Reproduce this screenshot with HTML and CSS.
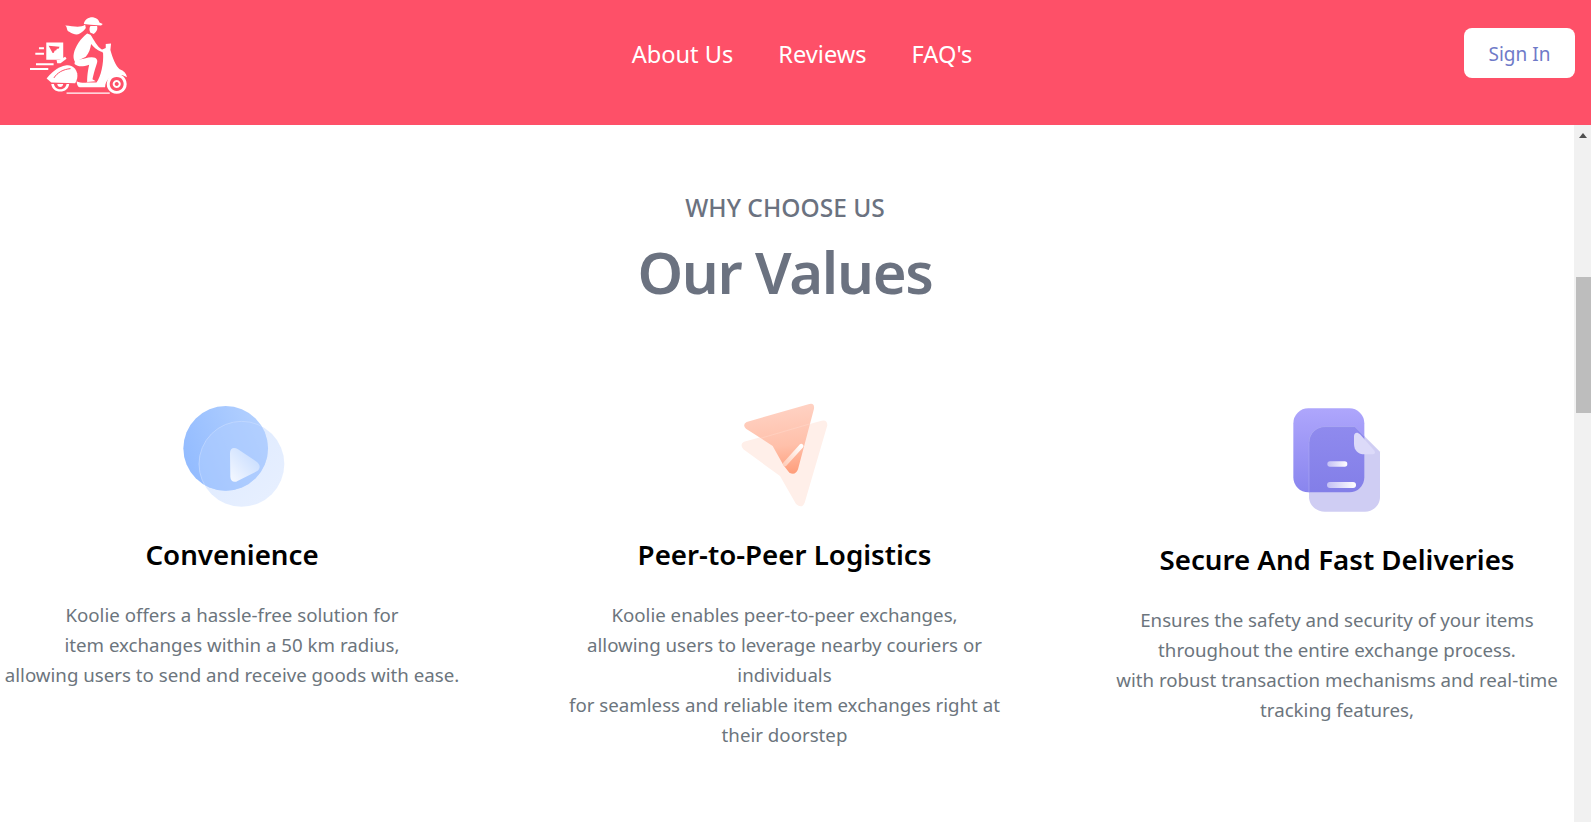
FILE: index.html
```html
<!DOCTYPE html>
<html lang="en">
<head>
<meta charset="utf-8">
<title>Koolie</title>
<link rel="stylesheet" href="styles.css">
</head>
<body>
<header class="topbar">
  <a class="logo" href="#" aria-label="Koolie">
    <svg class="logo-svg" viewBox="90 48 295 240" fill="#fff">
      <path d="M252 72C254 58 268 50 282 52C292 54 297 60 299 67L309 72L304 76L272 74Z"/>
      <path d="M272 78L292 78C294 86 292 92 288 96L282 102L272 98C268 92 268 84 272 78Z"/>
      <path d="M256 74C240 84 220 78 196 76C204 82 198 90 208 95C222 104 232 106 240 100C248 96 254 90 258 84Z"/>
      <path d="M262 100L272 104C282 118 292 140 308 150L306 156C290 150 280 140 274 132C272 145 268 160 258 170L226 186C216 172 222 150 236 128C244 116 252 108 262 100Z"/>
      <path d="M226 178C240 182 260 172 276 172C292 172 296 182 290 194C284 212 280 228 278 238L288 244L262 246C262 222 266 205 268 194C250 200 236 202 224 192Z"/>
      <path d="M318 132L334 130L332 150C338 172 348 198 360 208C372 212 380 220 382 232C366 222 344 222 332 232C322 240 316 250 316 262L240 262C232 260 232 252 230 244C240 248 252 250 262 248L290 248C304 230 312 190 310 160L304 150L318 144Z"/>
      <path fill-rule="evenodd" d="M139 127h51v52h-51zM146 137l33 3-3 6h-5l-2 5-5 1-2 6-4 1z"/>
      <path d="M170 180L178 180L196 170L200 176L182 190L172 190Z"/>
      <path d="M140 236C150 222 172 200 200 196C218 194 228 206 232 220C234 230 232 240 226 250L154 248Z"/>
      <path class="logo-cut" d="M162 234C172 218 190 208 212 206"/>
      <path fill-rule="evenodd" d="M154 252C156 266 166 275 181 275C196 275 206 266 208 252H200C198 262 190 268 181 268C172 268 164 262 162 252ZM172 252H190C189 258 186 261 181 261C176 261 173 258 172 252Z"/>
      <path fill-rule="evenodd" d="M351 222a30 30 0 1 0 .01 0zM351 231a21 21 0 1 1-.01 0zM351 240a12 12 0 1 0 .01 0zM351 246a6 6 0 1 1-.01 0z"/>
      <path d="M117 142h15v6h-15zM106 158h26v6h-26zM108 190h53v6h-53zM90 204h55v6H90z"/>
      <path d="M200 278h130v4H200z"/>
    </svg>
  </a>
  <nav class="nav">
    <a href="#">About Us</a>
    <a href="#">Reviews</a>
    <a href="#">FAQ's</a>
  </nav>
  <a class="signin" href="#">Sign In</a>
</header>
<div class="viewport">
  <main class="content">
    <section class="intro">
      <p class="eyebrow">WHY CHOOSE US</p>
      <h1 class="title">Our Values</h1>
    </section>
    <section class="values">
      <article class="value">
        <div class="icon-box">
          <svg class="icon icon-wide" viewBox="6 0 420 390">
            <defs>
              <linearGradient id="b1" x1="0" y1="0.7" x2="1" y2="0.3"><stop offset="0" stop-color="#92bbff"/><stop offset="1" stop-color="#b4d1ff"/></linearGradient>
              <linearGradient id="b2" x1="0" y1="0" x2="1" y2="1"><stop offset="0" stop-color="#dce9ff"/><stop offset="1" stop-color="#e8f0ff"/></linearGradient>
              <linearGradient id="b3" x1="0" y1="1" x2="1" y2="0"><stop offset="0" stop-color="#f6f9ff"/><stop offset="1" stop-color="#c0d8ff"/></linearGradient>
              <clipPath id="bc"><circle cx="197" cy="175" r="127"/></clipPath>
            </defs>
            <circle cx="245" cy="222" r="128" fill="url(#b2)"/>
            <circle cx="197" cy="175" r="127" fill="url(#b1)"/>
            <circle cx="245" cy="222" r="128" fill="#b0ceff" fill-opacity=".55" stroke="#c8ddff" stroke-width="2" clip-path="url(#bc)"/>
            <path d="M210 190C210 174 222 170 234 178L290 215C302 224 302 236 290 244L234 272C222 280 212 274 211 260Z" fill="url(#b3)"/>
          </svg>
        </div>
        <h2 class="value-title">Convenience</h2>
        <p class="value-text">Koolie offers a hassle-free solution for<br>item exchanges within a 50 km radius,<br>allowing users to send and receive goods with ease.</p>
      </article>
      <article class="value">
        <div class="icon-box">
          <svg class="icon" viewBox="0 0 390 390">
            <defs>
              <linearGradient id="o1" x1="0.5" y1="0" x2="0.6" y2="1"><stop offset="0" stop-color="#ffd3c5"/><stop offset=".6" stop-color="#ffc0aa"/><stop offset="1" stop-color="#ff9e7b"/></linearGradient>
              <linearGradient id="o2" x1="1" y1="0" x2="0" y2="1"><stop offset="0" stop-color="#fff"/><stop offset="1" stop-color="#ffd0bd"/></linearGradient>
            </defs>
            <path d="M72 155L305 92Q322 88 322 106L254 338Q246 358 228 342L180 258L70 178Q58 162 72 155Z" fill="#ffefe9"/>
            <path d="M80 96L268 42Q284 38 282 56L234 238Q226 258 208 248L190 225L158 168L78 116Q66 104 80 96Z" fill="url(#o1)"/>
            <path d="M118 146L282 98" stroke="#fff" stroke-opacity=".25" stroke-width="2"/>
            <path d="M195 222L244 168" stroke="url(#o2)" stroke-width="13" stroke-linecap="round"/>
          </svg>
        </div>
        <h2 class="value-title">Peer-to-Peer Logistics</h2>
        <p class="value-text">Koolie enables peer-to-peer exchanges,<br>allowing users to leverage nearby couriers or individuals<br>for seamless and reliable item exchanges right at their doorstep</p>
      </article>
      <article class="value value-low">
        <div class="icon-box">
          <svg class="icon" viewBox="6 0 390 390">
            <defs>
              <linearGradient id="p1" x1="0" y1="0" x2="0" y2="1"><stop offset="0" stop-color="#aea6fc"/><stop offset="1" stop-color="#8985ee"/></linearGradient>
              <linearGradient id="p2" x1="0" y1="0" x2="1" y2="0"><stop offset="0" stop-color="#c3c0f5"/><stop offset="1" stop-color="#fff"/></linearGradient>
              <linearGradient id="p3" x1="0" y1="0" x2="0" y2="1"><stop offset="0" stop-color="#8f8aee"/><stop offset="1" stop-color="#7f7be6"/></linearGradient>
              <clipPath id="pc"><rect x="70" y="40" width="213" height="252" rx="45"/></clipPath>
            </defs>
            <rect x="70" y="40" width="213" height="252" rx="45" fill="url(#p1)"/>
            <path d="M165 95H255L330 170V305C330 330 310 350 285 350H165C138 350 117 330 117 305V143C117 116 138 95 165 95Z" fill="#cfcdf3"/>
            <path d="M165 95H255L330 170V305C330 330 310 350 285 350H165C138 350 117 330 117 305V143C117 116 138 95 165 95Z" fill="url(#p3)" stroke="#a9a6f3" stroke-width="2" clip-path="url(#pc)"/>
            <path d="M252 124C252 112 262 110 270 118L312 166C318 174 314 178 306 178H284C264 178 252 166 252 146Z" fill="#dcdaf9"/>
            <rect x="172" y="199" width="60" height="16" rx="8" fill="url(#p2)"/>
            <rect x="171" y="261" width="87" height="18" rx="9" fill="url(#p2)"/>
          </svg>
        </div>
        <h2 class="value-title">Secure And Fast Deliveries</h2>
        <p class="value-text">Ensures the safety and security of your items<br>throughout the entire exchange process.<br>with robust transaction mechanisms and real-time tracking features,</p>
      </article>
    </section>
  </main>
  <div class="scrollbar" aria-hidden="true">
    <span class="scroll-arrow"></span>
    <span class="scroll-thumb"></span>
  </div>
</div>
</body>
</html>
```

FILE: styles.css
```css
* { box-sizing: border-box; }
html, body { margin: 0; height: 100%; overflow: hidden; }
body {
  display: flex;
  flex-direction: column;
  background: #fff;
  font-family: "Noto Sans", "Open Sans", sans-serif;
}
a { text-decoration: none; }

.topbar {
  flex: none;
  height: 125px;
  background: #fe5068;
  display: flex;
  align-items: center;
  justify-content: space-between;
  padding: 0 16px 19px 30px;
}
.logo { display: block; width: 110px; margin-top: 5px; }
.logo-svg { display: block; width: 98px; height: 80px; }
.logo-cut { fill: none; stroke: #fe5068; stroke-width: 3; }
.nav { display: flex; gap: 45px; padding-top: 2px; }
.nav a { color: #fff; font-size: 23.600px; line-height: 32px; }
.signin {
  width: 111px;
  height: 50px;
  padding-top: 2px;
  border-radius: 8px;
  background: #fff;
  color: #6f7ac8;
  font-size: 19px;
  display: flex;
  align-items: center;
  justify-content: center;
}

.viewport { flex: 1; min-height: 0; display: flex; }
.content { flex: 1; min-width: 0; padding-top: 64px; }

.intro { text-align: center; padding-right: 4px; }
.eyebrow {
  margin: 0;
  color: #6b7280;
  font-size: 24.500px;
  font-weight: 500;
  line-height: 38px;
}
.title {
  margin: 0;
  color: #6b7280;
  font-size: 58px;
  font-weight: 600;
  letter-spacing: -1.300px;
  line-height: 90px;
}

.values {
  display: grid;
  grid-template-columns: repeat(3, 460px);
  justify-content: space-between;
  padding: 0 7px 0 2px;
  margin-top: 73px;
}
.value { text-align: center; }
.value-low { padding-top: 5px; }
.icon-box { height: 130px; display: flex; justify-content: center; }
.icon { display: block; width: 130px; height: 130px; flex: none; }
.icon-wide { width: 140px; }
.value-title {
  margin: 14px 0 0;
  color: #000;
  font-size: 27.700px;
  font-weight: 600;
  line-height: 40px;
}
.value-text {
  margin: 26px 0 0;
  color: #6c757d;
  font-size: 18.700px;
  line-height: 30px;
}

.scrollbar {
  flex: none;
  width: 17px;
  background: #f1f1f1;
  display: flex;
  flex-direction: column;
  align-items: flex-end;
}
.scroll-arrow {
  margin: 8px 4px 0 0;
  width: 0;
  height: 0;
  border-left: 4.500px solid transparent;
  border-right: 4.500px solid transparent;
  border-bottom: 5px solid #505050;
}
.scroll-thumb {
  margin-top: 139px;
  width: 15px;
  height: 136px;
  background: #bdbdbd;
}
```
